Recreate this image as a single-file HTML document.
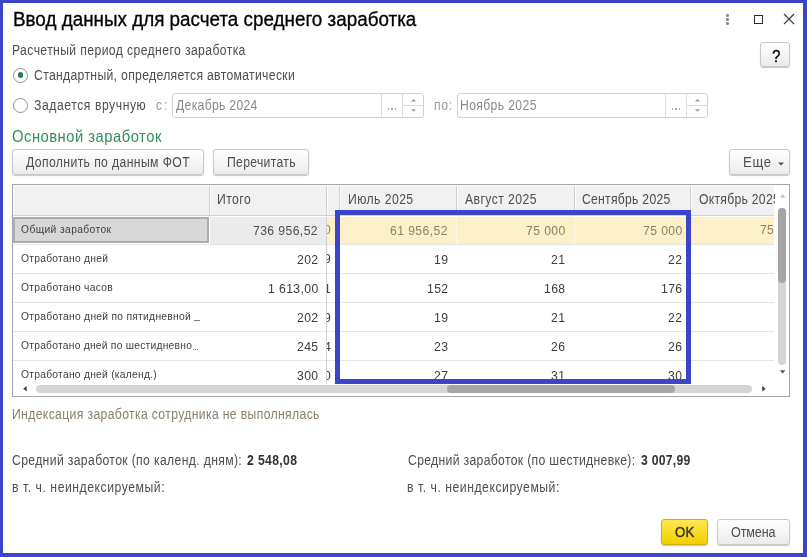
<!DOCTYPE html>
<html><head><meta charset="utf-8"><style>
html,body{margin:0;padding:0;width:807px;height:557px;overflow:hidden;background:#fff}
.t{position:absolute;white-space:nowrap;line-height:1;font-family:"Liberation Sans", sans-serif;will-change:transform}
</style></head><body>
<div style="position:absolute;left:0px;top:0px;width:807px;height:557px;background:#3c44c8"></div>
<div style="position:absolute;left:3px;top:3px;width:800px;height:550px;background:#fff"></div>
<div class="t" style="left:12.80px;top:10.64px;font-size:18.85px;color:#000;font-weight:normal;-webkit-text-stroke:0.3px #000;transform:scaleY(1.07);transform-origin:0 15.96px;">Ввод данных для расчета среднего заработка</div>
<div style="position:absolute;left:726.3px;top:14.3px;width:2.6px;height:2.6px;background:#8a8a8a;border-radius:50%"></div>
<div style="position:absolute;left:726.3px;top:18.3px;width:2.6px;height:2.6px;background:#8a8a8a;border-radius:50%"></div>
<div style="position:absolute;left:726.3px;top:22.3px;width:2.6px;height:2.6px;background:#8a8a8a;border-radius:50%"></div>
<div style="position:absolute;left:754px;top:15px;width:9px;height:9px;border:1px solid #2a2a2a;box-sizing:border-box"></div>
<svg style="position:absolute;left:783px;top:13px" width="12" height="12"><path d="M1 1L11 11M11 1L1 11" stroke="#3a3a3a" stroke-width="1.1"/></svg>
<div style="position:absolute;left:760px;top:42px;width:30px;height:25px;box-sizing:border-box;border:1px solid #c8c8c8;border-radius:3px;background:linear-gradient(#ffffff,#ebebeb);box-shadow:0 1px 1px rgba(0,0,0,0.22)"></div>
<div class="t" style="left:771.80px;top:48.73px;font-size:15.2px;color:#000;font-weight:normal;-webkit-text-stroke:0.25px #000;transform:scaleY(1.1);transform-origin:0 12.87px;">?</div>
<div class="t" style="left:11.70px;top:45.07px;font-size:12.2px;color:#4e4e4e;font-weight:normal;letter-spacing:0.390px;transform:scaleY(1.15);transform-origin:0 10.33px;">Расчетный период среднего заработка</div>
<div style="position:absolute;left:13px;top:68px;width:15px;height:15px;box-sizing:border-box;border:1px solid #929292;border-radius:50%;background:#fff"></div>
<div style="position:absolute;left:17.6px;top:72.4px;width:5.8px;height:5.8px;background:#2b7a50;border-radius:50%"></div>
<div class="t" style="left:34.10px;top:70.27px;font-size:12.2px;color:#4e4e4e;font-weight:normal;letter-spacing:0.325px;transform:scaleY(1.15);transform-origin:0 10.33px;">Стандартный, определяется автоматически</div>
<div style="position:absolute;left:13px;top:98px;width:15px;height:15px;box-sizing:border-box;border:1px solid #929292;border-radius:50%;background:#fff"></div>
<div class="t" style="left:34.10px;top:100.27px;font-size:12.2px;color:#4e4e4e;font-weight:normal;letter-spacing:0.553px;transform:scaleY(1.15);transform-origin:0 10.33px;">Задается вручную</div>
<div class="t" style="left:156.00px;top:100.27px;font-size:12.2px;color:#9c9c9c;font-weight:normal;letter-spacing:1.900px;transform:scaleY(1.15);transform-origin:0 10.33px;">с:</div>
<div class="t" style="left:433.55px;top:100.27px;font-size:12.2px;color:#9c9c9c;font-weight:normal;letter-spacing:0.700px;transform:scaleY(1.15);transform-origin:0 10.33px;">по:</div>
<div style="position:absolute;left:172px;top:93px;width:252px;height:25px;box-sizing:border-box;border:1px solid #d2d2d2;border-radius:3px;background:#fff"></div>
<div style="position:absolute;left:381px;top:94px;width:1px;height:23px;background:#dcdcdc"></div>
<div style="position:absolute;left:402px;top:94px;width:1px;height:23px;background:#dcdcdc"></div>
<div style="position:absolute;left:402px;top:105px;width:21px;height:1px;background:#dcdcdc"></div>
<div class="t" style="left:176.30px;top:100.27px;font-size:12.2px;color:#8a8a8a;font-weight:normal;letter-spacing:0.305px;transform:scaleY(1.15);transform-origin:0 10.33px;">Декабрь 2024</div>
<div style="position:absolute;left:387.9px;top:108.4px;width:1.2px;height:1.2px;background:#a0a0a0;border-radius:50%"></div>
<div style="position:absolute;left:391.4px;top:108.4px;width:1.2px;height:1.2px;background:#a0a0a0;border-radius:50%"></div>
<div style="position:absolute;left:394.9px;top:108.4px;width:1.2px;height:1.2px;background:#a0a0a0;border-radius:50%"></div>
<svg style="position:absolute;left:411.0px;top:98.5px" width="5" height="3"><path d="M0 2.6L2.5 0L5 2.6Z" fill="#9a9a9a"/></svg>
<svg style="position:absolute;left:411.0px;top:109px" width="5" height="3"><path d="M0 0.2L2.5 2.8L5 0.2Z" fill="#9a9a9a"/></svg>
<div style="position:absolute;left:457px;top:93px;width:251px;height:25px;box-sizing:border-box;border:1px solid #d2d2d2;border-radius:3px;background:#fff"></div>
<div style="position:absolute;left:665px;top:94px;width:1px;height:23px;background:#dcdcdc"></div>
<div style="position:absolute;left:686px;top:94px;width:1px;height:23px;background:#dcdcdc"></div>
<div style="position:absolute;left:686px;top:105px;width:21px;height:1px;background:#dcdcdc"></div>
<div class="t" style="left:460.30px;top:100.27px;font-size:12.2px;color:#8a8a8a;font-weight:normal;letter-spacing:0.365px;transform:scaleY(1.15);transform-origin:0 10.33px;">Ноябрь 2025</div>
<div style="position:absolute;left:671.9px;top:108.4px;width:1.2px;height:1.2px;background:#a0a0a0;border-radius:50%"></div>
<div style="position:absolute;left:675.4px;top:108.4px;width:1.2px;height:1.2px;background:#a0a0a0;border-radius:50%"></div>
<div style="position:absolute;left:678.9px;top:108.4px;width:1.2px;height:1.2px;background:#a0a0a0;border-radius:50%"></div>
<svg style="position:absolute;left:695.0px;top:98.5px" width="5" height="3"><path d="M0 2.6L2.5 0L5 2.6Z" fill="#9a9a9a"/></svg>
<svg style="position:absolute;left:695.0px;top:109px" width="5" height="3"><path d="M0 0.2L2.5 2.8L5 0.2Z" fill="#9a9a9a"/></svg>
<div class="t" style="left:12.15px;top:129.87px;font-size:14.8px;color:#31905a;font-weight:normal;letter-spacing:0.488px;transform:scaleY(1.1);transform-origin:0 12.53px;">Основной заработок</div>
<div style="position:absolute;left:12px;top:149px;width:192px;height:26px;box-sizing:border-box;border:1px solid #c8c8c8;border-radius:3px;background:linear-gradient(#ffffff,#ebebeb);box-shadow:0 1px 1px rgba(0,0,0,0.22)"></div>
<div class="t" style="left:26.30px;top:157.07px;font-size:12.2px;color:#4e4e4e;font-weight:normal;letter-spacing:0.389px;transform:scaleY(1.15);transform-origin:0 10.33px;">Дополнить по данным ФОТ</div>
<div style="position:absolute;left:213px;top:149px;width:96px;height:26px;box-sizing:border-box;border:1px solid #c8c8c8;border-radius:3px;background:linear-gradient(#ffffff,#ebebeb);box-shadow:0 1px 1px rgba(0,0,0,0.22)"></div>
<div class="t" style="left:226.50px;top:157.07px;font-size:12.2px;color:#4e4e4e;font-weight:normal;letter-spacing:0.306px;transform:scaleY(1.15);transform-origin:0 10.33px;">Перечитать</div>
<div style="position:absolute;left:729px;top:149px;width:61px;height:26px;box-sizing:border-box;border:1px solid #c8c8c8;border-radius:3px;background:linear-gradient(#ffffff,#ebebeb);box-shadow:0 1px 1px rgba(0,0,0,0.22)"></div>
<div class="t" style="left:742.50px;top:156.31px;font-size:13.1px;color:#4e4e4e;font-weight:normal;letter-spacing:0.675px;transform:scaleY(1.08);transform-origin:0 11.09px;">Еще</div>
<svg style="position:absolute;left:777.5px;top:161.5px" width="6" height="4"><path d="M0 0.5L6 0.5L3 3.5Z" fill="#555"/></svg>
<div style="position:absolute;left:12px;top:184px;width:778px;height:213px;box-sizing:border-box;border:1px solid #a6a6a6;background:#fff"></div>
<div style="position:absolute;left:13px;top:185px;width:761px;height:30px;background:#f1f1f1"></div>
<div style="position:absolute;left:13px;top:185px;width:761px;height:1px;background:#fbfbfb"></div>
<div style="position:absolute;left:13px;top:185px;width:1px;height:30px;background:#fbfbfb"></div>
<div style="position:absolute;left:13px;top:215px;width:761px;height:1px;background:#d2d2d2"></div>
<div style="position:absolute;left:13px;top:216px;width:761px;height:1px;background:#fdfdfd"></div>
<div style="position:absolute;left:209px;top:186px;width:1px;height:29px;background:#cfcfcf"></div>
<div style="position:absolute;left:210px;top:186px;width:1px;height:29px;background:#fbfbfb"></div>
<div style="position:absolute;left:326px;top:186px;width:1px;height:29px;background:#cfcfcf"></div>
<div style="position:absolute;left:327px;top:186px;width:1px;height:29px;background:#fbfbfb"></div>
<div style="position:absolute;left:339px;top:186px;width:1px;height:29px;background:#cfcfcf"></div>
<div style="position:absolute;left:340px;top:186px;width:1px;height:29px;background:#fbfbfb"></div>
<div style="position:absolute;left:456px;top:186px;width:1px;height:29px;background:#cfcfcf"></div>
<div style="position:absolute;left:457px;top:186px;width:1px;height:29px;background:#fbfbfb"></div>
<div style="position:absolute;left:574px;top:186px;width:1px;height:29px;background:#cfcfcf"></div>
<div style="position:absolute;left:575px;top:186px;width:1px;height:29px;background:#fbfbfb"></div>
<div style="position:absolute;left:690px;top:186px;width:1px;height:29px;background:#cfcfcf"></div>
<div style="position:absolute;left:691px;top:186px;width:1px;height:29px;background:#fbfbfb"></div>
<div class="t" style="left:217.30px;top:194.07px;font-size:12.2px;color:#4e4e4e;font-weight:normal;letter-spacing:0.450px;transform:scaleY(1.15);transform-origin:0 10.33px;">Итого</div>
<div class="t" style="left:347.50px;top:194.07px;font-size:12.2px;color:#4e4e4e;font-weight:normal;letter-spacing:0.444px;transform:scaleY(1.15);transform-origin:0 10.33px;">Июль 2025</div>
<div class="t" style="left:465.40px;top:194.07px;font-size:12.2px;color:#4e4e4e;font-weight:normal;letter-spacing:0.425px;transform:scaleY(1.15);transform-origin:0 10.33px;">Август 2025</div>
<div class="t" style="left:581.80px;top:194.07px;font-size:12.2px;color:#4e4e4e;font-weight:normal;letter-spacing:0.263px;transform:scaleY(1.15);transform-origin:0 10.33px;">Сентябрь 2025</div>
<div style="position:absolute;left:690px;top:185px;width:84.5px;height:30px;overflow:hidden"><div class="t" style="left:9.2px;top:9.07px;font-size:12.2px;letter-spacing:0.27px;color:#4e4e4e;transform:scaleY(1.15);transform-origin:0 10.33px">Октябрь 2025</div></div>
<div style="position:absolute;left:210px;top:217px;width:116px;height:27px;background:#ebebeb"></div>
<div style="position:absolute;left:327px;top:217px;width:447px;height:27px;background:#fcf0c8"></div>
<div style="position:absolute;left:456px;top:217px;width:1px;height:27px;background:#fff9e6"></div>
<div style="position:absolute;left:574px;top:217px;width:1px;height:27px;background:#fff9e6"></div>
<div style="position:absolute;left:690px;top:217px;width:1px;height:27px;background:#fff9e6"></div>
<div style="position:absolute;left:13px;top:217px;width:196px;height:26px;box-sizing:border-box;border:2px solid #adadad;background:#d7d7d7"></div>
<div style="position:absolute;left:13px;top:244px;width:761px;height:1px;background:#e6e6e6"></div>
<div style="position:absolute;left:13px;top:273px;width:761px;height:1px;background:#e6e6e6"></div>
<div style="position:absolute;left:13px;top:302px;width:761px;height:1px;background:#e6e6e6"></div>
<div style="position:absolute;left:13px;top:331px;width:761px;height:1px;background:#e6e6e6"></div>
<div style="position:absolute;left:13px;top:360px;width:761px;height:1px;background:#e6e6e6"></div>
<div style="position:absolute;left:326px;top:217px;width:1px;height:167px;background:#d0d0d0"></div>
<div class="t" style="left:20.70px;top:224.68px;font-size:10.3px;color:#3e3e3e;font-weight:normal;letter-spacing:0.371px;transform:scaleY(1.13);transform-origin:0 8.72px;">Общий заработок</div>
<div class="t" style="right:488.70px;top:224.67px;font-size:12.2px;color:#4e4e4e;font-weight:normal;letter-spacing:0.4px;transform:scaleY(1.12);transform-origin:0 10.33px;">736 956,52</div>
<div style="position:absolute;left:327px;top:215px;width:12px;height:28px;overflow:hidden"><div class="t" style="right:8.5px;top:9.27px;font-size:12.2px;color:#8c8266;transform:scaleY(1.12);transform-origin:0 10.33px">0</div></div>
<div class="t" style="right:358.80px;top:224.67px;font-size:12.2px;color:#8c8266;font-weight:normal;letter-spacing:0.4px;transform:scaleY(1.12);transform-origin:0 10.33px;">61 956,52</div>
<div class="t" style="right:241.80px;top:224.67px;font-size:12.2px;color:#8c8266;font-weight:normal;letter-spacing:0.4px;transform:scaleY(1.12);transform-origin:0 10.33px;">75 000</div>
<div class="t" style="right:124.40px;top:224.67px;font-size:12.2px;color:#8c8266;font-weight:normal;letter-spacing:0.4px;transform:scaleY(1.12);transform-origin:0 10.33px;">75 000</div>
<div class="t" style="left:20.70px;top:253.68px;font-size:10.3px;color:#3e3e3e;font-weight:normal;letter-spacing:0.254px;transform:scaleY(1.13);transform-origin:0 8.72px;">Отработано дней</div>
<div class="t" style="right:488.70px;top:253.67px;font-size:12.2px;color:#3c3c3c;font-weight:normal;letter-spacing:0.4px;transform:scaleY(1.12);transform-origin:0 10.33px;">202</div>
<div style="position:absolute;left:327px;top:244px;width:12px;height:28px;overflow:hidden"><div class="t" style="right:8.5px;top:9.27px;font-size:12.2px;color:#3c3c3c;transform:scaleY(1.12);transform-origin:0 10.33px">9</div></div>
<div class="t" style="right:358.80px;top:253.67px;font-size:12.2px;color:#3c3c3c;font-weight:normal;letter-spacing:0.4px;transform:scaleY(1.12);transform-origin:0 10.33px;">19</div>
<div class="t" style="right:241.80px;top:253.67px;font-size:12.2px;color:#3c3c3c;font-weight:normal;letter-spacing:0.4px;transform:scaleY(1.12);transform-origin:0 10.33px;">21</div>
<div class="t" style="right:124.40px;top:253.67px;font-size:12.2px;color:#3c3c3c;font-weight:normal;letter-spacing:0.4px;transform:scaleY(1.12);transform-origin:0 10.33px;">22</div>
<div class="t" style="left:20.70px;top:283.18px;font-size:10.3px;color:#3e3e3e;font-weight:normal;letter-spacing:0.263px;transform:scaleY(1.13);transform-origin:0 8.72px;">Отработано часов</div>
<div class="t" style="right:488.70px;top:283.17px;font-size:12.2px;color:#3c3c3c;font-weight:normal;letter-spacing:0.4px;transform:scaleY(1.12);transform-origin:0 10.33px;">1 613,00</div>
<div style="position:absolute;left:327px;top:273.5px;width:12px;height:28px;overflow:hidden"><div class="t" style="right:8.5px;top:9.27px;font-size:12.2px;color:#3c3c3c;transform:scaleY(1.12);transform-origin:0 10.33px">1</div></div>
<div class="t" style="right:358.80px;top:283.17px;font-size:12.2px;color:#3c3c3c;font-weight:normal;letter-spacing:0.4px;transform:scaleY(1.12);transform-origin:0 10.33px;">152</div>
<div class="t" style="right:241.80px;top:283.17px;font-size:12.2px;color:#3c3c3c;font-weight:normal;letter-spacing:0.4px;transform:scaleY(1.12);transform-origin:0 10.33px;">168</div>
<div class="t" style="right:124.40px;top:283.17px;font-size:12.2px;color:#3c3c3c;font-weight:normal;letter-spacing:0.4px;transform:scaleY(1.12);transform-origin:0 10.33px;">176</div>
<div class="t" style="left:20.70px;top:312.18px;font-size:10.3px;color:#3e3e3e;font-weight:normal;letter-spacing:0.266px;transform:scaleY(1.13);transform-origin:0 8.72px;">Отработано дней по пятидневной</div>
<div style="position:absolute;left:194.2px;top:319.5px;width:1.6px;height:1.4px;background:#7a7a7a"></div>
<div style="position:absolute;left:196.25px;top:319.5px;width:1.6px;height:1.4px;background:#7a7a7a"></div>
<div style="position:absolute;left:198.3px;top:319.5px;width:1.6px;height:1.4px;background:#7a7a7a"></div>
<div class="t" style="right:488.70px;top:312.17px;font-size:12.2px;color:#3c3c3c;font-weight:normal;letter-spacing:0.4px;transform:scaleY(1.12);transform-origin:0 10.33px;">202</div>
<div style="position:absolute;left:327px;top:302.5px;width:12px;height:28px;overflow:hidden"><div class="t" style="right:8.5px;top:9.27px;font-size:12.2px;color:#3c3c3c;transform:scaleY(1.12);transform-origin:0 10.33px">9</div></div>
<div class="t" style="right:358.80px;top:312.17px;font-size:12.2px;color:#3c3c3c;font-weight:normal;letter-spacing:0.4px;transform:scaleY(1.12);transform-origin:0 10.33px;">19</div>
<div class="t" style="right:241.80px;top:312.17px;font-size:12.2px;color:#3c3c3c;font-weight:normal;letter-spacing:0.4px;transform:scaleY(1.12);transform-origin:0 10.33px;">21</div>
<div class="t" style="right:124.40px;top:312.17px;font-size:12.2px;color:#3c3c3c;font-weight:normal;letter-spacing:0.4px;transform:scaleY(1.12);transform-origin:0 10.33px;">22</div>
<div class="t" style="left:20.70px;top:341.18px;font-size:10.3px;color:#3e3e3e;font-weight:normal;letter-spacing:0.228px;transform:scaleY(1.13);transform-origin:0 8.72px;">Отработано дней по шестидневно</div>
<div style="position:absolute;left:192.8px;top:348.5px;width:1.6px;height:1.4px;background:#7a7a7a"></div>
<div style="position:absolute;left:194.85px;top:348.5px;width:1.6px;height:1.4px;background:#7a7a7a"></div>
<div style="position:absolute;left:196.9px;top:348.5px;width:1.6px;height:1.4px;background:#7a7a7a"></div>
<div class="t" style="right:488.70px;top:341.17px;font-size:12.2px;color:#3c3c3c;font-weight:normal;letter-spacing:0.4px;transform:scaleY(1.12);transform-origin:0 10.33px;">245</div>
<div style="position:absolute;left:327px;top:331.5px;width:12px;height:28px;overflow:hidden"><div class="t" style="right:8.5px;top:9.27px;font-size:12.2px;color:#3c3c3c;transform:scaleY(1.12);transform-origin:0 10.33px">4</div></div>
<div class="t" style="right:358.80px;top:341.17px;font-size:12.2px;color:#3c3c3c;font-weight:normal;letter-spacing:0.4px;transform:scaleY(1.12);transform-origin:0 10.33px;">23</div>
<div class="t" style="right:241.80px;top:341.17px;font-size:12.2px;color:#3c3c3c;font-weight:normal;letter-spacing:0.4px;transform:scaleY(1.12);transform-origin:0 10.33px;">26</div>
<div class="t" style="right:124.40px;top:341.17px;font-size:12.2px;color:#3c3c3c;font-weight:normal;letter-spacing:0.4px;transform:scaleY(1.12);transform-origin:0 10.33px;">26</div>
<div class="t" style="left:20.70px;top:370.18px;font-size:10.3px;color:#3e3e3e;font-weight:normal;letter-spacing:0.248px;transform:scaleY(1.13);transform-origin:0 8.72px;">Отработано дней (календ.)</div>
<div class="t" style="right:488.70px;top:370.17px;font-size:12.2px;color:#3c3c3c;font-weight:normal;letter-spacing:0.4px;transform:scaleY(1.12);transform-origin:0 10.33px;">300</div>
<div style="position:absolute;left:327px;top:360.5px;width:12px;height:28px;overflow:hidden"><div class="t" style="right:8.5px;top:9.27px;font-size:12.2px;color:#3c3c3c;transform:scaleY(1.12);transform-origin:0 10.33px">0</div></div>
<div class="t" style="right:358.80px;top:370.17px;font-size:12.2px;color:#3c3c3c;font-weight:normal;letter-spacing:0.4px;transform:scaleY(1.12);transform-origin:0 10.33px;">27</div>
<div class="t" style="right:241.80px;top:370.17px;font-size:12.2px;color:#3c3c3c;font-weight:normal;letter-spacing:0.4px;transform:scaleY(1.12);transform-origin:0 10.33px;">31</div>
<div class="t" style="right:124.40px;top:370.17px;font-size:12.2px;color:#3c3c3c;font-weight:normal;letter-spacing:0.4px;transform:scaleY(1.12);transform-origin:0 10.33px;">30</div>
<div style="position:absolute;left:690px;top:217px;width:84px;height:27px;overflow:hidden"><div class="t" style="left:70px;top:7.27px;font-size:12.2px;letter-spacing:0.3px;color:#8c8266;transform:scaleY(1.12);transform-origin:0 10.33px">75 000</div></div>
<div style="position:absolute;left:13px;top:384px;width:761px;height:12px;background:#fff"></div>
<div style="position:absolute;left:36px;top:385px;width:716px;height:8px;background:#d5d5d5;border-radius:4px"></div>
<div style="position:absolute;left:446.5px;top:385px;width:228.5px;height:8px;background:#a5a5a5;border-radius:4px"></div>
<svg style="position:absolute;left:22.5px;top:386.3px" width="4" height="6"><path d="M3.7 0L0.2 2.8L3.7 5.6Z" fill="#404040"/></svg>
<svg style="position:absolute;left:762px;top:386.3px" width="4" height="6"><path d="M0.2 0L3.7 2.8L0.2 5.6Z" fill="#404040"/></svg>
<div style="position:absolute;left:778px;top:207.5px;width:8px;height:157.5px;background:#d5d5d5;border-radius:4px"></div>
<div style="position:absolute;left:778px;top:207.5px;width:8px;height:75px;background:#a5a5a5;border-radius:4px"></div>
<svg style="position:absolute;left:779.5px;top:193.8px" width="6" height="4"><path d="M0 3.6L2.7 0.2L5.4 3.6Z" fill="#bdbdbd"/></svg>
<svg style="position:absolute;left:779.5px;top:369.5px" width="6" height="4"><path d="M0 0.2L5.4 0.2L2.7 3.6Z" fill="#505050"/></svg>
<div style="position:absolute;left:335px;top:210px;width:356px;height:174px;box-sizing:border-box;border:5px solid #3c44c8"></div>
<div class="t" style="left:11.90px;top:409.27px;font-size:12.2px;color:#8a7f6c;font-weight:normal;letter-spacing:0.358px;transform:scaleY(1.15);transform-origin:0 10.33px;">Индексация заработка сотрудника не выполнялась</div>
<div class="t" style="left:12.40px;top:455.27px;font-size:12.2px;color:#4e4e4e;font-weight:normal;letter-spacing:0.356px;transform:scaleY(1.15);transform-origin:0 10.33px;">Средний заработок (по календ. дням):</div>
<div class="t" style="left:247.15px;top:455.27px;font-size:12.2px;color:#333;font-weight:bold;letter-spacing:0.357px;transform:scaleY(1.15);transform-origin:0 10.33px;">2 548,08</div>
<div class="t" style="left:12.15px;top:482.37px;font-size:12.2px;color:#4e4e4e;font-weight:normal;letter-spacing:0.546px;transform:scaleY(1.15);transform-origin:0 10.33px;">в т. ч. неиндексируемый:</div>
<div class="t" style="left:407.50px;top:455.27px;font-size:12.2px;color:#4e4e4e;font-weight:normal;letter-spacing:0.329px;transform:scaleY(1.15);transform-origin:0 10.33px;">Средний заработок (по шестидневке):</div>
<div class="t" style="left:640.65px;top:455.27px;font-size:12.2px;color:#333;font-weight:bold;letter-spacing:0.264px;transform:scaleY(1.15);transform-origin:0 10.33px;">3 007,99</div>
<div class="t" style="left:406.65px;top:482.37px;font-size:12.2px;color:#4e4e4e;font-weight:normal;letter-spacing:0.537px;transform:scaleY(1.15);transform-origin:0 10.33px;">в т. ч. неиндексируемый:</div>
<div style="position:absolute;left:661px;top:519px;width:47px;height:26px;box-sizing:border-box;border:1px solid #cfae10;border-radius:3px;background:linear-gradient(#fde84e,#f3cf00);box-shadow:0 1px 1px rgba(0,0,0,0.22)"></div>
<div class="t" style="left:674.60px;top:526.03px;font-size:13.2px;color:#3a3a26;font-weight:normal;-webkit-text-stroke:0.45px #3a3a26;letter-spacing:0.350px;transform:scaleY(1.08);transform-origin:0 11.17px;">OK</div>
<div style="position:absolute;left:717px;top:519px;width:73px;height:26px;box-sizing:border-box;border:1px solid #c8c8c8;border-radius:3px;background:linear-gradient(#ffffff,#ebebeb);box-shadow:0 1px 1px rgba(0,0,0,0.22)"></div>
<div class="t" style="left:730.90px;top:526.53px;font-size:12.6px;color:#4e4e4e;font-weight:normal;letter-spacing:-0.130px;transform:scaleY(1.1);transform-origin:0 10.67px;">Отмена</div>

</body></html>
